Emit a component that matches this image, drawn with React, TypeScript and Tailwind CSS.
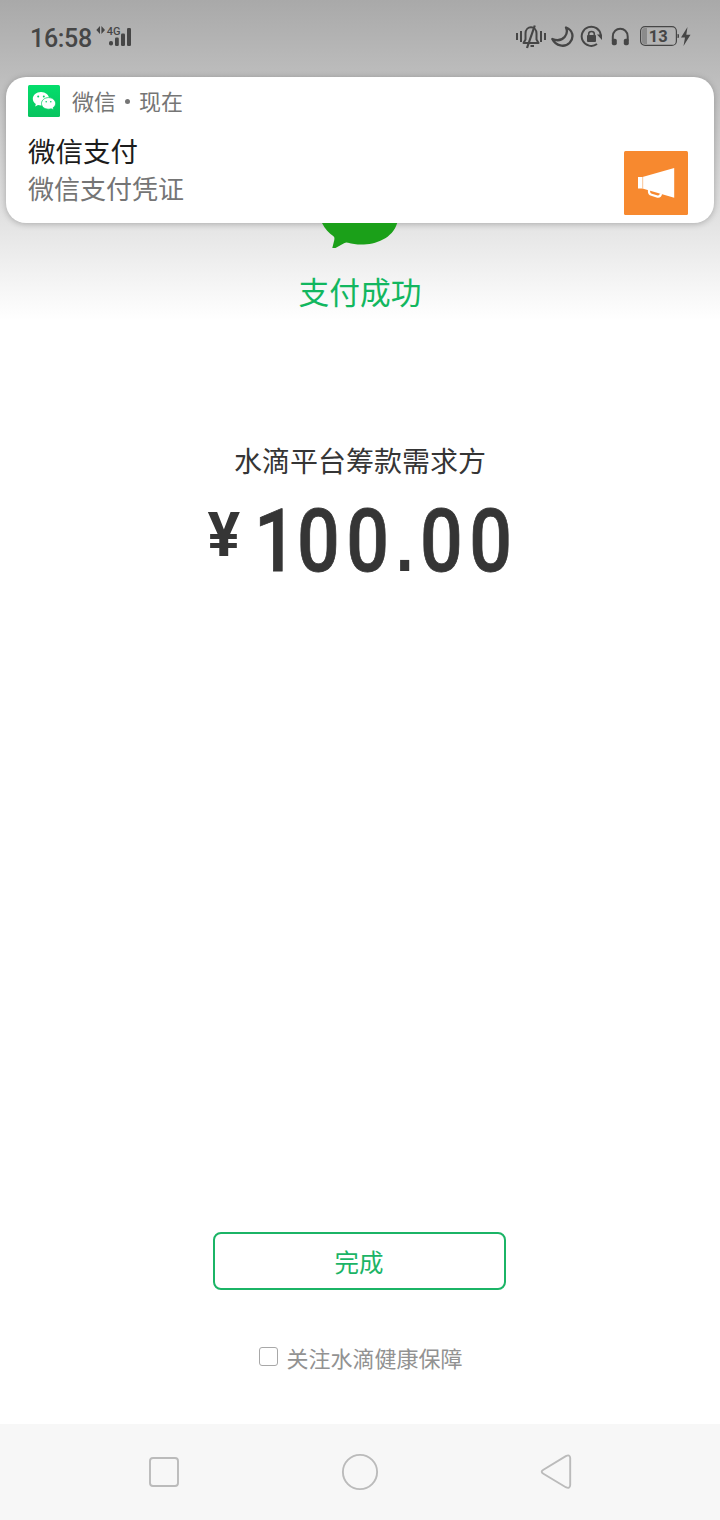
import { useState } from 'react'

const navItems = [
  { label: '最近任务', shape: <rect x="5" y="5" width="28" height="28" rx="3" /> },
  { label: '主屏幕', shape: <circle cx="19" cy="19" r="17.1" /> },
  {
    label: '返回',
    shape: <path d="M6.4 16.8 L28.8 3.2 Q32.9 1 33.2 5 V32 Q32.9 36.2 28.8 34.2 L6.4 20.8 Q3 18.8 6.4 16.8 Z" />,
  },
]

function SignalIcon() {
  return (
    <svg width="38" height="24" viewBox="0 0 38 24" fill="#464646">
      <path d="M4 2 V10 L0.3 6 Z M5.4 2 L9 6 L5.4 10 Z" />
      <text x="10.8" y="11.2" fontSize="11" fontWeight="500" fontFamily="Roboto, sans-serif">
        4G
      </text>
      <rect x="13" y="17" width="4" height="4.5" rx="1.8" />
      <rect x="19" y="13.5" width="3.8" height="8.5" rx="1.2" />
      <rect x="25" y="9.5" width="4" height="12.5" rx="1.2" />
      <rect x="31" y="4" width="4" height="18" rx="1.2" />
    </svg>
  )
}

function StatusBar() {
  return (
    <div className="flex h-[77px] items-start justify-between pr-[28px] pl-[30px] text-[#464646]">
      <div className="flex items-start">
        <span className="mt-6 w-[66px] text-[25px] leading-[30px] font-medium tracking-[-0.3px]">16:58</span>
        <div className="mt-6">
          <SignalIcon />
        </div>
      </div>

      <div className="mt-6 flex">
        {/* 静音振动 */}
        <svg className="mr-[5px]" width="30" height="26" viewBox="0 0 30 26" fill="none" stroke="#464646" strokeWidth="2">
          <path d="M1 9 V16 M5 7 V18 M25 7 V18 M29 9 V16" />
          <path d="M7.5 19 H22.5 L20.5 15.5 V9.5 C20.5 1.2 9.5 1.2 9.5 9.5 V15.5 Z" strokeLinejoin="round" />
          <path d="M18.8 1.5 L11 24" strokeWidth="2.2" />
          <path d="M14.5 22 H18" />
        </svg>
        {/* 勿扰 */}
        <svg className="mr-[6px]" width="23" height="26" viewBox="0 0 23 26" fill="none" stroke="#464646" strokeWidth="2.3" strokeLinejoin="round">
          <path d="M15 3.5 C22 6 23.4 13.5 18.7 18.7 C13.5 24 4.8 22 1.3 15 C6 17 10.8 16.2 13.8 12.7 C16 10 16.4 6.5 15 3.5 Z" />
        </svg>
        {/* 方向锁定 */}
        <svg className="mr-[8px]" width="23" height="26" viewBox="0 0 23 26" fill="none" stroke="#464646" strokeWidth="2">
          <path d="M20.8 11 A9.6 9.6 0 1 0 17 20" />
          <path d="M17 10.5 H22 V16 Z" fill="#464646" stroke="none" />
          <rect x="7" y="11" width="9" height="7" rx="1" fill="#464646" stroke="none" />
          <path d="M8.7 12 V9.8 C8.7 6.7 14.3 6.7 14.3 9.8 V12" strokeWidth="1.6" />
        </svg>
        {/* 耳机 */}
        <svg className="mr-[10px]" width="19" height="26" viewBox="0 0 19 26" fill="none" stroke="#464646" strokeWidth="2">
          <path d="M1.8 16.5 V12.5 C1.8 2.2 16.7 2.2 16.7 12.5 V16.5" />
          <rect x="0.8" y="14.8" width="5" height="6.4" rx="1.8" fill="#464646" stroke="none" />
          <rect x="12.8" y="14.8" width="5" height="6.4" rx="1.8" fill="#464646" stroke="none" />
        </svg>
        {/* 电量 */}
        <svg width="52" height="26" viewBox="0 0 52 26" fill="#464646">
          <rect x="0.6" y="2.6" width="35.8" height="18.8" rx="4.5" fill="none" stroke="#464646" strokeWidth="1.2" />
          <path d="M7 4 V20 H4.5 Q2 20 2 17.5 V6.5 Q2 4 4.5 4 Z" fill="#8b8b8b" />
          <text x="18.3" y="18" fontSize="16.5" fontWeight="700" textAnchor="middle" fontFamily="Roboto, sans-serif">
            13
          </text>
          <path d="M37.5 10 H38 Q39 10 39 11 V13 Q39 14 38 14 H37.5 Z" />
          <path d="M47.5 3 L41 13.5 H45 L43.5 22 L50.5 10.8 H46.3 Z" />
        </svg>
      </div>
    </div>
  )
}

function WechatIcon() {
  return (
    <svg width="32" height="32" viewBox="0 0 32 32">
      <defs>
        <linearGradient id="wechat" x1="0" y1="0" x2="0" y2="1">
          <stop offset="0" stopColor="#04de6c" />
          <stop offset="1" stopColor="#08c45f" />
        </linearGradient>
      </defs>
      <rect width="32" height="32" rx="1.5" fill="url(#wechat)" />
      <path d="M13 7 C8.3 7 4.8 10 4.8 13.8 C4.8 16 6 17.8 7.8 19 L7.2 21.5 L10 20 C11 20.3 12 20.5 13 20.5 C17.5 20.5 21.2 17.5 21.2 13.8 C21.2 10 17.5 7 13 7 Z" fill="#fff" />
      <path d="M20.6 12.6 C16.5 12.6 13.5 15.3 13.5 18.5 C13.5 21.8 16.5 24.2 20.6 24.2 C21.5 24.2 22.4 24.1 23.2 23.8 L25.6 25 L25 22.8 C26.6 21.8 27.6 20.3 27.6 18.5 C27.6 15.3 24.6 12.6 20.6 12.6 Z" fill="#fff" stroke="#06d166" strokeWidth="0.8" />
      <g fill="#06cf65">
        <circle cx="10.2" cy="11.6" r="1" />
        <circle cx="15.8" cy="11.6" r="1" />
        <circle cx="18.2" cy="16.7" r="0.8" />
        <circle cx="22.8" cy="16.7" r="0.8" />
      </g>
    </svg>
  )
}

function Notification() {
  return (
    <div className="mx-1.5 flex h-[146px] justify-between rounded-[20px] bg-white pr-[26px] pl-[22px] shadow-[0_1px_6px_rgba(0,0,0,0.25)]">
      <div className="flex flex-col">
        <div className="mt-2 flex h-8 items-center text-[22px] text-[#757575]">
          <WechatIcon />
          <span className="ml-3 pt-1 leading-8">微信</span>
          <span className="mx-[9px] mt-px h-[5px] w-[5px] rounded-full bg-[#757575]" />
          <span className="pt-1 leading-8">现在</span>
        </div>
        <p className="mt-[17px] text-[27.5px] leading-[38px] text-[#1c1c1c]">微信支付</p>
        <p className="text-[26px] leading-[37px] text-[#757575]">微信支付凭证</p>
      </div>
      <svg className="mt-[74px]" width="64" height="64" viewBox="0 0 64 64">
        <rect width="64" height="64" rx="1.5" fill="#f7892f" />
        <path d="M14 26 H18.5 L50.2 17 V46.8 L18.5 37.5 H14 Z" fill="#fff" />
        <path d="M18.7 26 V37.5" stroke="#f9b47a" strokeWidth="0.8" />
        <path d="M25 38 V40.5 Q25 43 27.5 43.8 L33.5 45.6 Q36.5 46 37 42.5" fill="none" stroke="#fff" strokeWidth="2.2" />
      </svg>
    </div>
  )
}

function PayResult() {
  return (
    <div className="flex flex-col items-center">
      <svg width="80" height="26" viewBox="0 0 80 26">
        <path d="M2 0 C5 6 9 10 13.5 13.3 Q15 14.5 14.3 17 L12.3 25 H15.5 L24.5 20 Q26 19.2 28 19.8 C44 24.5 71 20.5 77.2 0 Z" fill="#1ba019" />
      </svg>
      <h1 className="mt-[21px] text-[30.7px] leading-[48px] text-[#12b75f]">支付成功</h1>
      <p className="mt-[125px] text-[28px] leading-10 text-[#353535]">水滴平台筹款需求方</p>
      <div className="mt-[9px] flex h-[100px] w-[305px] items-start text-[#353535]">
        <span className="w-[40px] shrink-0 text-[61px] leading-[86px] font-bold">¥</span>
        <span className="shrink-0 origin-left scale-x-[0.87] text-[86.5px] leading-[100px] font-medium tracking-[7.5px] whitespace-nowrap [-webkit-text-stroke:0.8px_#353535]">
          <span className="inline-block w-[56.3px] pl-[7px] tracking-normal">1</span>
          00
          <span className="inline-block w-[28px] pr-[7px] text-center font-['Liberation_Sans'] text-[74px] leading-none font-bold tracking-normal [-webkit-text-stroke:0px]">
            .
          </span>
          00
        </span>
      </div>
    </div>
  )
}

export default function App() {
  const [followed, setFollowed] = useState(false)

  return (
    <div className="flex h-[1520px] w-[720px] flex-col bg-white bg-[linear-gradient(to_bottom,#a9a9a9_0px,#bdbdbd_77px,#e4e4e4_225px,#ffffff_320px)] font-['Roboto','Noto_Sans_CJK_SC',sans-serif]">
      <StatusBar />
      <Notification />
      <PayResult />

      <div className="mt-auto flex flex-col items-center">
        <button
          type="button"
          className="mr-0.5 h-[58px] w-[293px] rounded-lg border-2 border-[#1bb466] pt-1.5 text-[24.5px] text-[#1bb466]"
        >
          完成
        </button>
        <label className="mt-[50px] mb-[48px] ml-0.5 flex h-9 items-center text-[22px] text-[#929292]">
          <input
            type="checkbox"
            checked={followed}
            onChange={(e) => setFollowed(e.target.checked)}
            className="mr-2 mb-1 h-[19px] w-[19px] appearance-none rounded-[3px] border border-[#a8a8a8] checked:bg-[#1bb466]"
          />
          <span className="pt-0.5">关注水滴健康保障</span>
        </label>
      </div>

      <nav className="flex h-24 items-center justify-center gap-[158px] bg-[#f7f7f7]">
        {navItems.map((item) => (
          <button key={item.label} type="button" aria-label={item.label}>
            <svg width="38" height="38" viewBox="0 0 38 38" fill="none" stroke="#bbbbbb" strokeWidth="1.9">
              {item.shape}
            </svg>
          </button>
        ))}
      </nav>
    </div>
  )
}
